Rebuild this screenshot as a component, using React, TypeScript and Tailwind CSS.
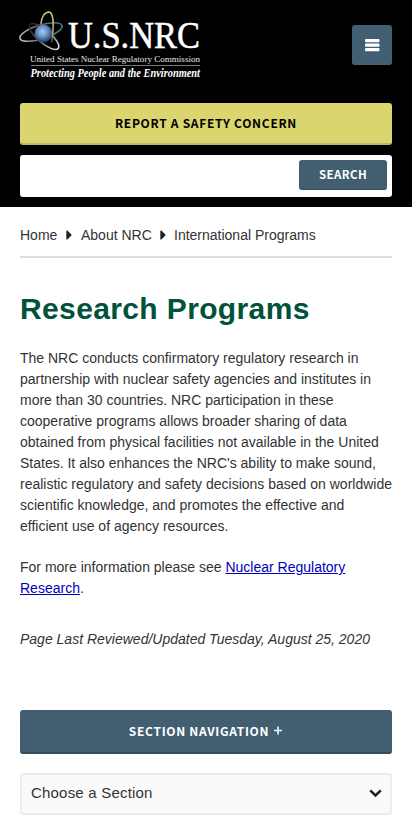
import React from "react";

const label = "font-['Noto_Sans_CJK_SC','Noto_Sans',sans-serif] font-bold";

function Logo() {
  return (
    <svg className="overflow-visible" width="184" height="72" viewBox="18 10 184 72" role="img" aria-label="U.S.NRC">
      <defs>
        <radialGradient id="core" cx="0.45" cy="0.4" r="0.6">
          <stop offset="0" stopColor="#a9cdee" />
          <stop offset="0.5" stopColor="#668fc6" />
          <stop offset="1" stopColor="#1a365f" />
        </radialGradient>
        <linearGradient id="orbitA" x1="0" y1="0" x2="1" y2="0">
          <stop offset="0" stopColor="#2b2220" />
          <stop offset="0.5" stopColor="#5f7076" />
          <stop offset="1" stopColor="#cfe0dc" />
        </linearGradient>
        <linearGradient id="orbitB" x1="0" y1="0" x2="1" y2="0">
          <stop offset="0" stopColor="#c3b8ba" />
          <stop offset="0.45" stopColor="#6d6468" />
          <stop offset="1" stopColor="#3f7f88" />
        </linearGradient>
        <linearGradient id="orbitC" x1="0" y1="0" x2="0" y2="1">
          <stop offset="0" stopColor="#d0c987" />
          <stop offset="0.7" stopColor="#b5a45c" />
          <stop offset="1" stopColor="#3d4430" />
        </linearGradient>
      </defs>
      <g fill="none" strokeWidth="1.6">
        <ellipse cx="41" cy="32" rx="22" ry="7" transform="rotate(-17 41 32)" stroke="url(#orbitB)" />
        <ellipse cx="44" cy="36.5" rx="18.5" ry="6.5" transform="rotate(40 44 36.5)" stroke="url(#orbitA)" />
      </g>
      <circle cx="43.5" cy="33.5" r="9" fill="url(#core)" />
      <path d="M41 24C41 17 45 12 49 12C54 13 54 27 51.5 43" fill="none" strokeWidth="1.5" stroke="url(#orbitC)" />
      <g fill="#fff" fontFamily="'Liberation Serif', serif">
        <text x="68" y="47.7" fontSize="37.5" stroke="#fff" strokeWidth="0.5" textLength="132" lengthAdjust="spacingAndGlyphs">U.S.NRC</text>
        <text x="30" y="61.5" fontSize="8.8" fill="#e8e8e8" textLength="170" lengthAdjust="spacingAndGlyphs">United States Nuclear Regulatory Commission</text>
        <rect x="31" y="65" width="169" height="1" fill="#777" />
        <text x="30.5" y="77.3" fontSize="11.5" fontWeight="bold" fontStyle="italic" textLength="169.5" lengthAdjust="spacingAndGlyphs">Protecting People and the Environment</text>
      </g>
    </svg>
  );
}

function Arrow() {
  return (
    <svg width="6" height="10" viewBox="0 0 6 10" fill="#222" aria-hidden="true">
      <path d="M0.3 1.1Q0.4 0 1.3 0.6L5.2 4.3Q5.8 5 5.2 5.7L1.3 9.4Q0.4 10 0.3 8.9Z" />
    </svg>
  );
}

export default function App() {
  return (
    <div className="flex h-[823px] w-full flex-col overflow-hidden bg-white font-['Liberation_Sans',Arial,sans-serif] text-sm leading-[21px] text-[#333]">
      <header className="flex h-[207px] shrink-0 flex-col bg-black px-5 pt-[10px]">
        <div className="flex h-[93px] shrink-0 items-start justify-between">
          <div className="-ml-0.5"><Logo /></div>
          <button aria-label="Menu" className="mt-[15px] flex size-10 items-center justify-center rounded-[3px] border-b border-[#52616b] bg-[#415f73]">
            <svg width="16" height="14" viewBox="0 0 16 14" fill="#fff">
              <rect x="1" y="1" width="14.5" height="3.2" rx="1" />
              <rect x="1" y="5.5" width="14.5" height="3.2" rx="1" />
              <rect x="1" y="10" width="14.5" height="3.2" rx="1" />
            </svg>
          </button>
        </div>
        <button className={`${label} flex h-[42px] shrink-0 items-center justify-center rounded-[3px] border-b-2 border-[#bbb66c] bg-[#dbd56f] pb-px text-[12px] tracking-[0.7px] text-black`}>
          REPORT A SAFETY CONCERN
        </button>
        <div className="mt-[10px] flex h-[42px] shrink-0 items-start justify-end rounded-[3px] bg-white pt-[5px] pr-[5px]">
          <button className={`${label} flex h-[30px] w-[88px] items-center justify-center rounded-[3px] border-b border-[#344c5c] bg-[#415f70] pb-px text-[11.5px] tracking-[0.4px] text-white`}>
            SEARCH
          </button>
        </div>
      </header>
      <main className="flex flex-col px-5">
        <nav className="flex h-[51px] items-start border-b-2 border-[#ddd] pt-[18px]">
          <span className="w-[46px]">Home</span>
          <span className="mt-[5px] w-[15px]"><Arrow /></span>
          <span className="w-[79px]">About NRC</span>
          <span className="mt-[5px] w-[14px]"><Arrow /></span>
          <span>International Programs</span>
        </nav>
        <h1 className="mt-[33px] text-[30px] leading-[36px] font-bold tracking-[0.37px] text-[#00533a]">Research Programs</h1>
        <p className="mt-[21px] -mr-1">
          The NRC conducts confirmatory regulatory research in<br />
          partnership with nuclear safety agencies and institutes in<br />
          more than 30 countries. NRC participation in these<br />
          cooperative programs allows broader sharing of data<br />
          obtained from physical facilities not available in the United<br />
          States. It also enhances the NRC's ability to make sound,<br />
          realistic regulatory and safety decisions based on worldwide<br />
          scientific knowledge, and promotes the effective and<br />
          efficient use of agency resources.
        </p>
        <p className="mt-5">
          For more information please see{" "}
          <a href="#" className="text-[#0000bb] underline">Nuclear Regulatory<br />Research</a>.
        </p>
        <p className="mt-[30px] italic">Page Last Reviewed/Updated Tuesday, August 25, 2020</p>
        <button className={`${label} mt-[60px] flex h-11 items-center justify-center gap-1 rounded-[3px] border-b-2 border-[#344c5a] bg-[#415f71] pb-px text-[12px] tracking-[0.7px] text-white`}>
          <span>SECTION NAVIGATION</span>
          <svg width="10" height="10" viewBox="0 0 10 10" stroke="#e5f5ff" strokeWidth="1.7"><path d="M1 4.5H9M5 0.5V8.5" /></svg>
        </button>
        <div className="mt-[19px] flex h-[42px] items-center justify-between rounded-[3px] border-2 border-[#ededed] bg-[#fafafa] pr-[8px] pl-[9px] text-[15px] tracking-[0.2px]">
          <span className="-mt-[3px]">Choose a Section</span>
          <svg className="-mt-[2px]" width="13" height="9" viewBox="0 0 13 9" fill="none" stroke="#222" strokeWidth="2.5"><path d="M1.2 1.3L6.5 6.5L11.8 1.3" /></svg>
        </div>
      </main>
    </div>
  );
}
